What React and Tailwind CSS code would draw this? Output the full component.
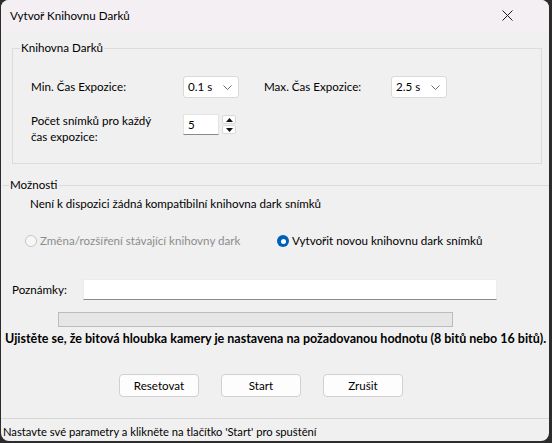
import React from 'react';

const font = { fontFamily: 'Lato, "Noto Sans", sans-serif' };

function Combo({ value }) {
  return (
    <div className="flex h-[22px] w-[56px] items-center justify-between rounded-[3px] border border-[#d9d9d9] bg-white pl-[4px] pr-[6px]">
      <span>{value}</span>
      <svg width="9" height="5" viewBox="0 0 9 5" fill="none">
        <path d="M0.5 0.5 L4.5 4.5 L8.5 0.5" stroke="#6b6b6b" strokeWidth="1" />
      </svg>
    </div>
  );
}

function SpinButton({ up }) {
  return (
    <div className="flex h-[9px] w-[14px] items-center justify-center rounded-[2px] border border-[#dadada] bg-[#fdfdfd]">
      <svg width="7" height="4" viewBox="0 0 7 4">
        <path d={up ? 'M0 4 L3.5 0 L7 4 Z' : 'M0 0 L3.5 4 L7 0 Z'} fill="#111" />
      </svg>
    </div>
  );
}

function Button({ children }) {
  return (
    <button className="h-[23px] w-[80px] rounded-[4px] border border-[#d0d0d0] bg-[#fdfdfd] text-[11.6px] text-black">
      {children}
    </button>
  );
}

export default function App() {
  return (
    <div className="h-[443px] w-[552px] bg-[#2c2c2c] pl-px" style={font}>
      <div className="flex h-[441px] w-[548px] flex-col overflow-hidden rounded-[8px] bg-[#f0f0f0] text-[11.6px] leading-[16px] text-black">
        {/* title bar */}
        <div className="flex h-[31px] shrink-0 items-center justify-between bg-[#f3eff3] pl-[9px] pr-[36px]">
          <span>Vytvoř Knihovnu Darků</span>
          <svg width="11" height="11" viewBox="0 0 11 11">
            <path d="M0.5 0.5 L10.5 10.5 M10.5 0.5 L0.5 10.5" stroke="#1a1a1a" strokeWidth="1" />
          </svg>
        </div>

        {/* Knihovna Darků */}
        <div className="relative ml-[11px] mt-[17px] h-[116px] w-[530px] shrink-0 border border-[#dcdcdc] pl-[18px] pt-[27px]">
          <span className="absolute left-[7px] top-[-9px] bg-[#f0f0f0] px-px">Knihovna Darků</span>
          <div className="flex items-center">
            <span className="w-[152px]">Min. Čas Expozice:</span>
            <Combo value="0.1 s" />
            <span className="ml-[25px] w-[127px]">Max. Čas Expozice:</span>
            <Combo value="2.5 s" />
          </div>
          <div className="mt-[16px] flex items-start">
            <span className="-mt-px w-[152px]">
              Počet snímků pro každý
              <br />
              čas expozice:
            </span>
            <div className="flex h-[21px] w-[36px] items-center border border-[#e3e3e3] border-b-[#8a8a8a] bg-white pl-[4px]">5</div>
            <div className="ml-[3px] mt-[1px] flex flex-col gap-[1px]">
              <SpinButton up />
              <SpinButton />
            </div>
          </div>
        </div>

        {/* Možnosti */}
        <div className="mt-[13px] flex shrink-0 items-center pl-[1px]">
          <div className="h-px w-[7px] bg-[#dcdcdc]" />
          <span className="px-[1px]">Možnosti</span>
          <div className="h-px flex-1 bg-[#dcdcdc]" />
        </div>
        <div className="mt-[3px] shrink-0 pl-[29px]">Není k dispozici žádná kompatibilní knihovna dark snímků</div>
        <div className="mt-[21px] flex shrink-0 items-center">
          <div className="ml-[24px] flex w-[252px] items-center text-[#8c8c8c]">
            <span className="mr-[3px] h-[12px] w-[12px] rounded-full border border-[#c6c6c6] bg-[#f7f7f7]" />
            Změna/rozšíření stávající knihovny dark
          </div>
          <div className="flex items-center">
            <span className="mr-[3px] flex h-[12px] w-[12px] items-center justify-center rounded-full bg-[#005fb8]">
              <span className="h-[5px] w-[5px] rounded-full bg-white" />
            </span>
            Vytvořit novou knihovnu dark snímků
          </div>
        </div>

        {/* Poznámky */}
        <div className="mt-[30px] flex shrink-0 items-center">
          <span className="w-[82px] pl-[11px]">Poznámky:</span>
          <div className="h-[21px] w-[414px] border border-[#ececec] border-b-[#8a8a8a] bg-white" />
        </div>
        <div className="ml-[57px] mt-[12px] h-[15px] w-[395px] shrink-0 border border-[#bcbcbc] bg-[#e6e6e6]" />
        <div className="mt-[4px] shrink-0 whitespace-nowrap pl-[4px] text-[12.5px] font-bold">
          Ujistěte se, že bitová hloubka kamery je nastavena na požadovanou hodnotu (8 bitů nebo 16 bitů).
        </div>

        {/* buttons */}
        <div className="mt-[27px] flex shrink-0 gap-[22px] pl-[118px]">
          <Button>Resetovat</Button>
          <Button>Start</Button>
          <Button>Zrušit</Button>
        </div>

        {/* status bar */}
        <div className="mt-[21px] flex-1 border-t border-[#d7d7d7] pl-[2px] pt-[5px] text-[11.2px]">
          Nastavte své parametry a klikněte na tlačítko 'Start' pro spuštění
        </div>
      </div>
    </div>
  );
}
